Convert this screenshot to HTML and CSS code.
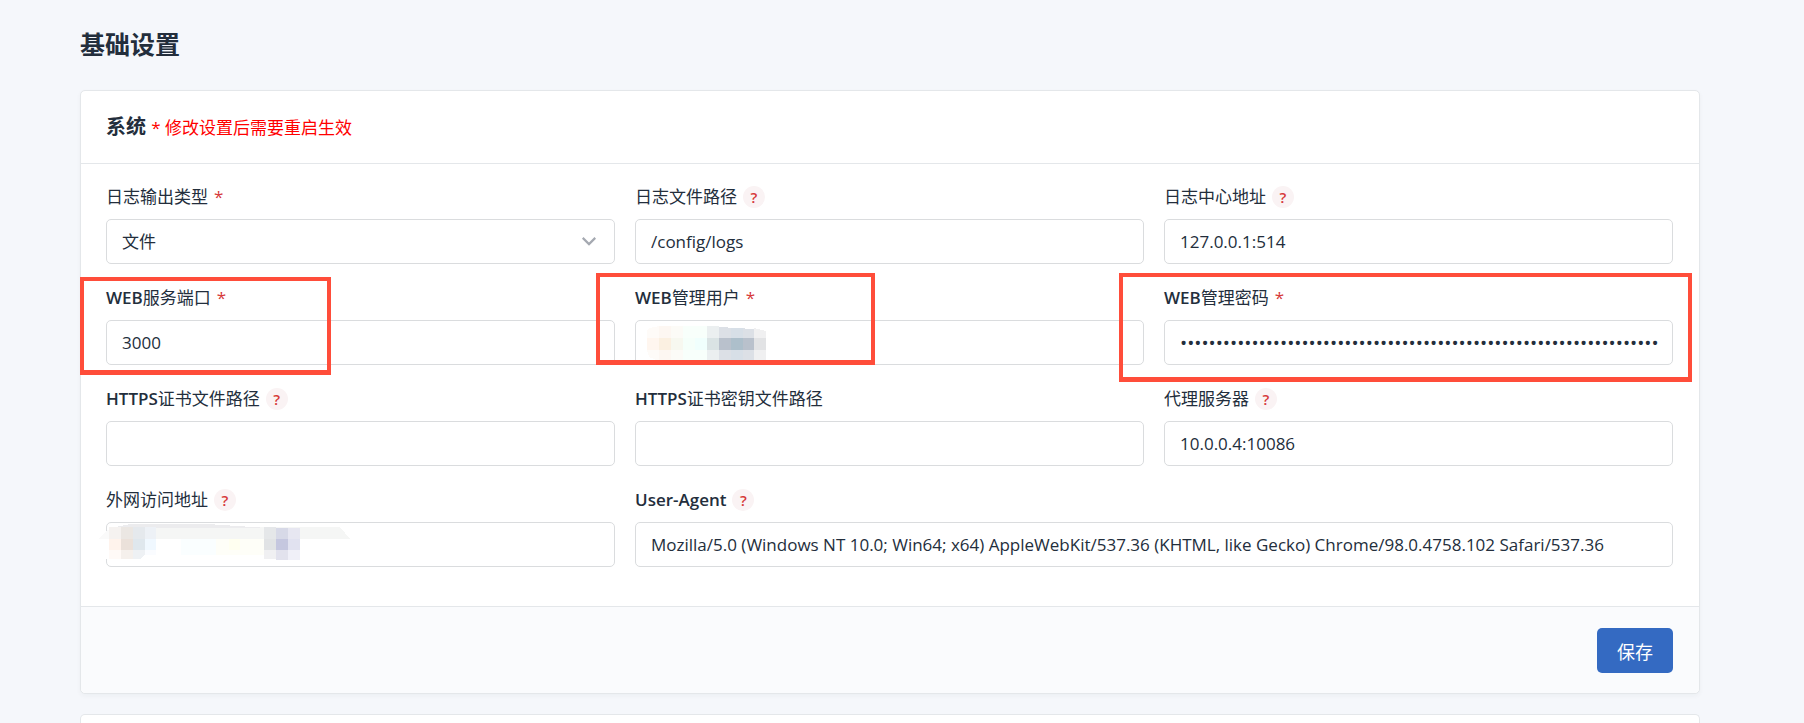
FILE: index.html
```html
<!DOCTYPE html>
<html lang="zh-CN">
<head>
    <meta charset="UTF-8">
    <title>基础设置</title>
    <link rel="stylesheet" href="styles.css">
</head>
<body>
    <div class="page">
        <h2 class="page-title">基础设置</h2>

        <form class="card">
            <div class="card-header">
                <h3 class="card-title">系统 <span class="card-tip">* 修改设置后需要重启生效</span></h3>
            </div>
            <div class="card-body">
                <div class="field">
                    <label class="form-label" for="logtype">日志输出类型 <span class="required">*</span></label>
                    <div class="select-wrap">
                        <select class="form-control" id="logtype">
                            <option selected>文件</option>
                        </select>
                        <svg class="chevron" viewBox="0 0 16 16" width="20" height="20">
                            <path d="M3 5.5l5 5 5-5" fill="none" stroke="#a5a9b1" stroke-width="1.7"/>
                        </svg>
                    </div>
                </div>
                <div class="field">
                    <label class="form-label" for="logpath">日志文件路径 <span class="form-help">?</span></label>
                    <input class="form-control" type="text" id="logpath" value="/config/logs">
                </div>
                <div class="field">
                    <label class="form-label" for="logserver">日志中心地址 <span class="form-help">?</span></label>
                    <input class="form-control" type="text" id="logserver" value="127.0.0.1:514">
                </div>

                <div class="field">
                    <label class="form-label" for="webport"><span><b>WEB</b>服务端口</span> <span class="required">*</span></label>
                    <input class="form-control" type="text" id="webport" value="3000">
                    <div class="mark mark-port"></div>
                </div>
                <div class="field">
                    <label class="form-label" for="webuser"><span><b>WEB</b>管理用户</span> <span class="required">*</span></label>
                    <input class="form-control" type="text" id="webuser">
                    <svg class="mosaic mosaic-user" viewBox="0 0 120 36" width="120" height="36" shape-rendering="crispEdges">
                        <path fill="#fefbf8" d="M3 2l9-2v12H0V4zM0 24h12v11L2 31z"/>
                        <path fill="#fdf7f2" d="M12 0h12v12H12zM12 24h12v11H12z"/>
                        <path fill="#fcfbf7" d="M24 0h12v12H24zM24 24h12v11H24z"/>
                        <path fill="#f8fffb" d="M36 0h24v12H36zM36 24h24v10H36z"/>
                        <path fill="#ebeff0" d="M60 0h12v12H60zM60 24h12v12H60z"/>
                        <path fill="#dce0e6" d="M72 1l35 2v9H72zM72 24h35v12H72z"/>
                        <path fill="#d7dfe7" d="M84 2h12v10H84zM84 24h12v12H84z"/>
                        <path fill="#f0f0f1" d="M107 2l12 3v7h-12zM107 24h12v12h-12z"/>
                        <path fill="#fff6ef" d="M0 12h12v12H0z"/>
                        <path fill="#fbf0e1" d="M12 12h12v12H12z"/>
                        <path fill="#f7f8f0" d="M24 12h12v12H24z"/>
                        <path fill="#f5fffa" d="M36 12h12v12H36z"/>
                        <path fill="#f0fffd" d="M48 12h12v12H48z"/>
                        <path fill="#dae3e4" d="M60 12h12v12H60z"/>
                        <path fill="#b9c1cc" d="M72 12h35v12H72z"/>
                        <path fill="#adbfcb" d="M84 12h12v12H84z"/>
                        <path fill="#e2e3e5" d="M107 12h12v12h-12z"/>
                    </svg>
                    <div class="mark mark-user"></div>
                </div>
                <div class="field">
                    <label class="form-label" for="webpass"><span><b>WEB</b>管理密码</span> <span class="required">*</span></label>
                    <input class="form-control" type="password" id="webpass" value="0000000000000000000000000000000000000000000000000000000000000000000">
                    <div class="mark mark-pass"></div>
                </div>

                <div class="field">
                    <label class="form-label" for="cert"><span><b>HTTPS</b>证书文件路径</span> <span class="form-help">?</span></label>
                    <input class="form-control" type="text" id="cert">
                </div>
                <div class="field">
                    <label class="form-label" for="certkey"><span><b>HTTPS</b>证书密钥文件路径</span></label>
                    <input class="form-control" type="text" id="certkey">
                </div>
                <div class="field">
                    <label class="form-label" for="proxy">代理服务器 <span class="form-help">?</span></label>
                    <input class="form-control" type="text" id="proxy" value="10.0.0.4:10086">
                </div>

                <div class="field">
                    <label class="form-label" for="domain">外网访问地址 <span class="form-help">?</span></label>
                    <input class="form-control" type="text" id="domain">
                    <svg class="mosaic mosaic-domain" viewBox="0 0 252 38" width="252" height="38" shape-rendering="crispEdges">
                        <path fill="#fff" d="M6 8h18v28H6z"/>
                        <path fill="#fafafa" d="M8 7h4v9H0z"/>
                        <path fill="#f5f6f5" d="M10 4h231l10 12H10z"/>
                        <path fill="#ececee" d="M17 4l14-3h78l44 3 15 1H17z"/>
                        <path fill="#f5f2f0" d="M10 4h12v12H10z"/>
                        <path fill="#ebe7e3" d="M22 4h12v12H22z"/>
                        <path fill="#e5e9ed" d="M34 4h12v12H34z"/>
                        <path fill="#edf1f6" d="M46 4h11v12H46z"/>
                        <path fill="#fff3ec" d="M10 16h12v11H10z"/>
                        <path fill="#ebe1da" d="M22 16h12v11H22z"/>
                        <path fill="#dfe7ed" d="M34 16h12v11H34z"/>
                        <path fill="#f0f8ff" d="M46 16h11v11H46z"/>
                        <path fill="#fffaf7" d="M10 27h12v9H10z"/>
                        <path fill="#f5f0ec" d="M22 27h12v9H22z"/>
                        <path fill="#eef1f4" d="M34 27h12v4l-5 5h-7z"/>
                        <path fill="#fafcff" d="M46 27h11v5H46z"/>
                        <path fill="#fafeff" d="M82 16h35v16H82z"/>
                        <path fill="#fefef8" d="M117 16h48v16h-48z"/>
                        <path fill="#fffff0" d="M130 16h11v11h-11z"/>
                        <path fill="#e5e7e9" d="M165 4h12v12h-12z"/>
                        <path fill="#d7d9e7" d="M177 5h12v11h-12z"/>
                        <path fill="#e7e7f1" d="M189 5h12v11h-12z"/>
                        <path fill="#e1e3e5" d="M165 16h12v11h-12z"/>
                        <path fill="#c5c7df" d="M177 16h12v11h-12z"/>
                        <path fill="#e1e2f0" d="M189 16h12v11h-12z"/>
                        <path fill="#f0f0f2" d="M165 27h12v9h-12z"/>
                        <path fill="#e2e2ed" d="M177 27h12v10h-12z"/>
                        <path fill="#f0f0f8" d="M189 27h12v10h-12z"/>
                    </svg>
                </div>
                <div class="field field-wide">
                    <label class="form-label" for="useragent"><b>User-Agent</b> <span class="form-help">?</span></label>
                    <input class="form-control" type="text" id="useragent" value="Mozilla/5.0 (Windows NT 10.0; Win64; x64) AppleWebKit/537.36 (KHTML, like Gecko) Chrome/98.0.4758.102 Safari/537.36">
                </div>
            </div>
            <div class="card-footer">
                <button class="btn" type="button">保存</button>
            </div>
        </form>

        <div class="card card-next"></div>
    </div>
</body>
</html>
```
FILE: styles.css
```css
* {
    box-sizing: border-box;
}
body {
    margin: 0;
    background: #f5f7fb;
    color: #232e3c;
    font-family: "Open Sans", "Noto Sans CJK SC", sans-serif;
    font-size: 17px;
    line-height: 25px;
}
.page {
    padding: 28px 104px 0 80px;
}
.page-title {
    margin: 0 0 30px;
    font-size: 25px;
    line-height: 32px;
    font-weight: bold;
}
.card {
    margin-bottom: 20px;
    background: #fff;
    border: 1px solid #e4e7ea;
    border-radius: 5px;
    box-shadow: 0 2px 5px rgba(35, 46, 60, 0.04);
}
.card-header {
    padding: 23px 25px;
    border-bottom: 1px solid #e4e7ea;
}
.card-title {
    margin: 0;
    font-size: 20px;
    line-height: 25px;
    font-weight: bold;
}
.card-tip {
    color: #ff0000;
    font-size: 17px;
    font-weight: normal;
}
.card-body {
    display: grid;
    grid-template-columns: repeat(3, 1fr);
    gap: 21px 20px;
    padding: 20px 26px 39px 25px;
}
.field {
    position: relative;
    min-width: 0;
}
.field-wide {
    grid-column: span 2;
}
.form-label {
    display: flex;
    align-items: center;
    gap: 6px;
    height: 25px;
    margin-bottom: 10px;
    white-space: nowrap;
}
.form-label b {
    font-weight: 600;
}
.required {
    color: #d63939;
}
.form-help {
    width: 22px;
    height: 22px;
    border-radius: 50%;
    background: #faf3f4;
    color: #d63939;
    font-size: 15px;
    font-weight: 600;
    line-height: 22px;
    text-align: center;
}
.form-control {
    display: block;
    width: 100%;
    height: 45px;
    padding: 0 15px;
    background: #fff;
    border: 1px solid #dadcde;
    border-radius: 5px;
    color: inherit;
    font-family: inherit;
    font-size: 17px;
    appearance: none;
}
.form-control[type="password"] {
    padding-right: 10px;
    font-size: 19px;
}
.select-wrap {
    position: relative;
}
.chevron {
    position: absolute;
    top: 12px;
    right: 16px;
    pointer-events: none;
}

/* blurred values */
.mosaic {
    position: absolute;
}
.mosaic-user {
    left: 12px;
    top: 41px;
}
.mosaic-domain {
    left: -7px;
    top: 36px;
}

/* highlight frames */
.mark {
    position: absolute;
    z-index: 1;
    border: 4px solid #ff4d3a;
    pointer-events: none;
}
.mark-port {
    left: -26px;
    top: -8px;
    width: 251px;
    height: 98px;
    border-bottom-width: 5px;
}
.mark-user {
    left: -39px;
    top: -12px;
    width: 279px;
    height: 92px;
    border-bottom-width: 5px;
}
.mark-pass {
    left: -45px;
    right: -19px;
    top: -12px;
    height: 109px;
    border-bottom-width: 5px;
}

.card-footer {
    display: flex;
    justify-content: flex-end;
    padding: 21px 26px 20px;
    background: #fafbfd;
    border-top: 1px solid #e4e7ea;
    border-radius: 0 0 5px 5px;
}
.btn {
    height: 45px;
    padding: 0 20px;
    background: #346ac2;
    color: #fff;
    border: none;
    border-radius: 5px;
    font-family: inherit;
    font-size: 18px;
    cursor: pointer;
}
.card-next {
    height: 10px;
    margin-bottom: 0;
    border-bottom: none;
    border-radius: 5px 5px 0 0;
    box-shadow: none;
}
```
